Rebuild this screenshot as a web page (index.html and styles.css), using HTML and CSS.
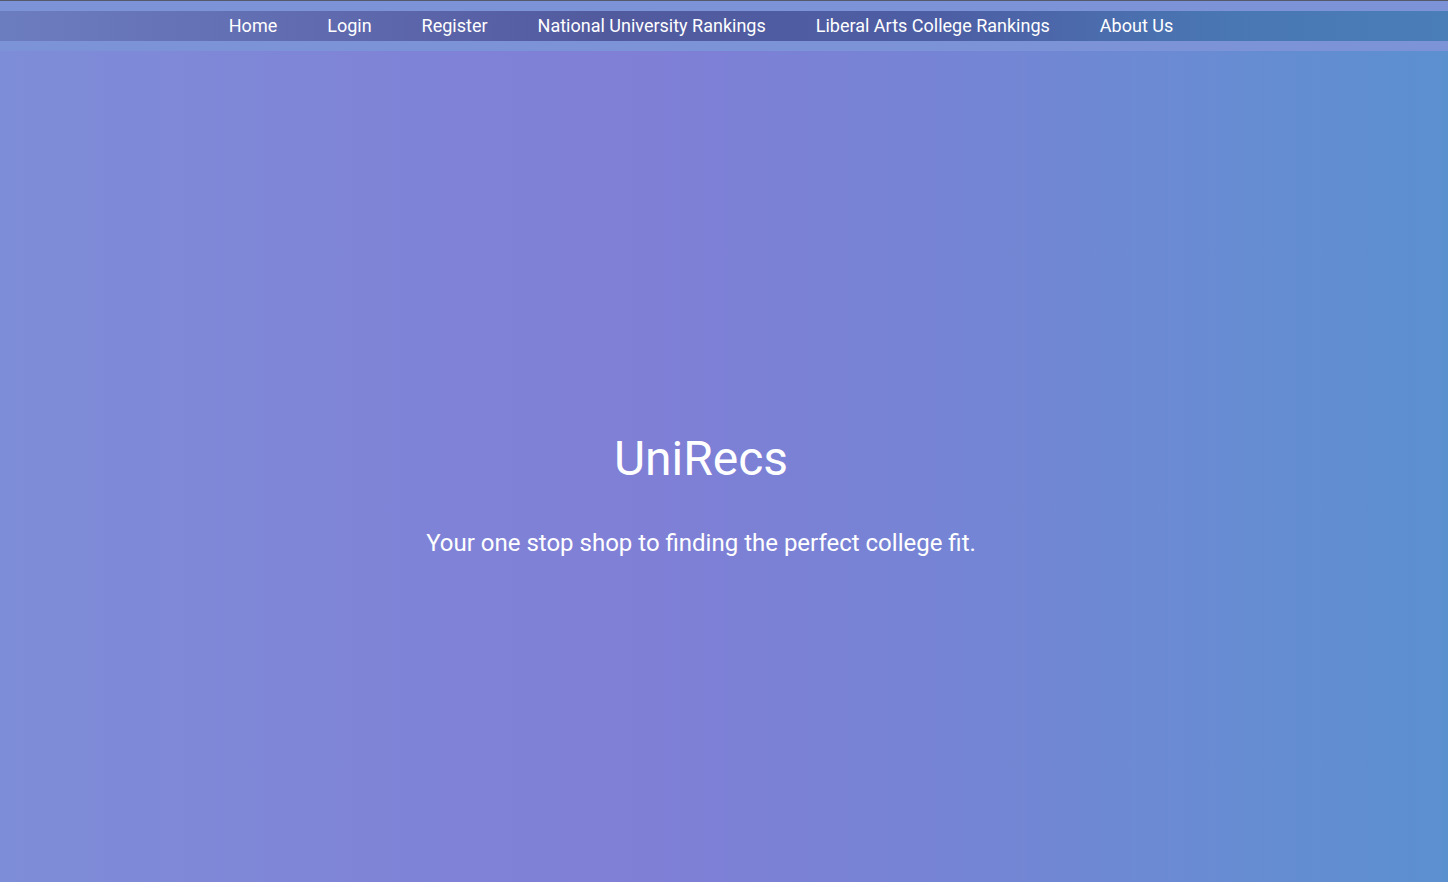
FILE: index.html
```html
<!DOCTYPE html>
<html lang="en">
<head>
<meta charset="utf-8">
<title>UniRecs</title>
<link rel="stylesheet" href="styles.css">
</head>
<body>
<header class="top">
  <nav class="nav">
    <ul class="nav-list">
      <li><a href="#">Home</a></li>
      <li><a href="#">Login</a></li>
      <li><a href="#">Register</a></li>
      <li><a href="#">National University Rankings</a></li>
      <li><a href="#">Liberal Arts College Rankings</a></li>
      <li><a href="#">About Us</a></li>
    </ul>
  </nav>
</header>
<main class="hero">
  <div class="hero-inner">
    <h1 class="title">UniRecs</h1>
    <p class="tagline">Your one stop shop to finding the perfect college fit.</p>
  </div>
</main>
</body>
</html>
```

FILE: styles.css
```css
html, body {
  margin: 0;
  padding: 0;
  height: 100%;
}
body {
  font-family: Roboto, "Noto Sans", sans-serif;
  color: #fff;
  background: #7c94d6;
  display: flex;
  flex-direction: column;
  overflow: hidden;
}
.top {
  border-top: 1px solid #555a6a;
  padding: 10px 0;
  background: #7c94d7;
}
.nav {
  height: 30px;
  background: linear-gradient(to right, #6c7dbf 0%, #5e68ad 25%, #525a9e 42%, #4d5ea4 65%, #4977b4 85%, #4a7eb8 100%);
}
.nav-list {
  list-style: none;
  margin: 0;
  padding: 0 46px 0 0;
  height: 100%;
  display: flex;
  justify-content: center;
  align-items: center;
}
.nav-list a {
  display: block;
  padding: 0 25px;
  color: #fff;
  text-decoration: none;
  font-size: 18px;
  line-height: 30px;
}
.hero {
  flex: 1;
  background: linear-gradient(to right, #7e8dd7 0%, #7f84d7 25%, #7f7fd6 45%, #7684d5 65%, #6a8bd3 82%, #5b90cf 100%);
  display: flex;
  justify-content: center;
  align-items: center;
  padding-right: 46px;
}
.hero-inner {
  text-align: center;
  margin-top: 55px;
}
.title {
  margin: 0;
  font-size: 48px;
  font-weight: 400;
  line-height: 56px;
}
.tagline {
  margin: 41px 0 0;
  font-size: 24px;
  line-height: 30px;
}
```
